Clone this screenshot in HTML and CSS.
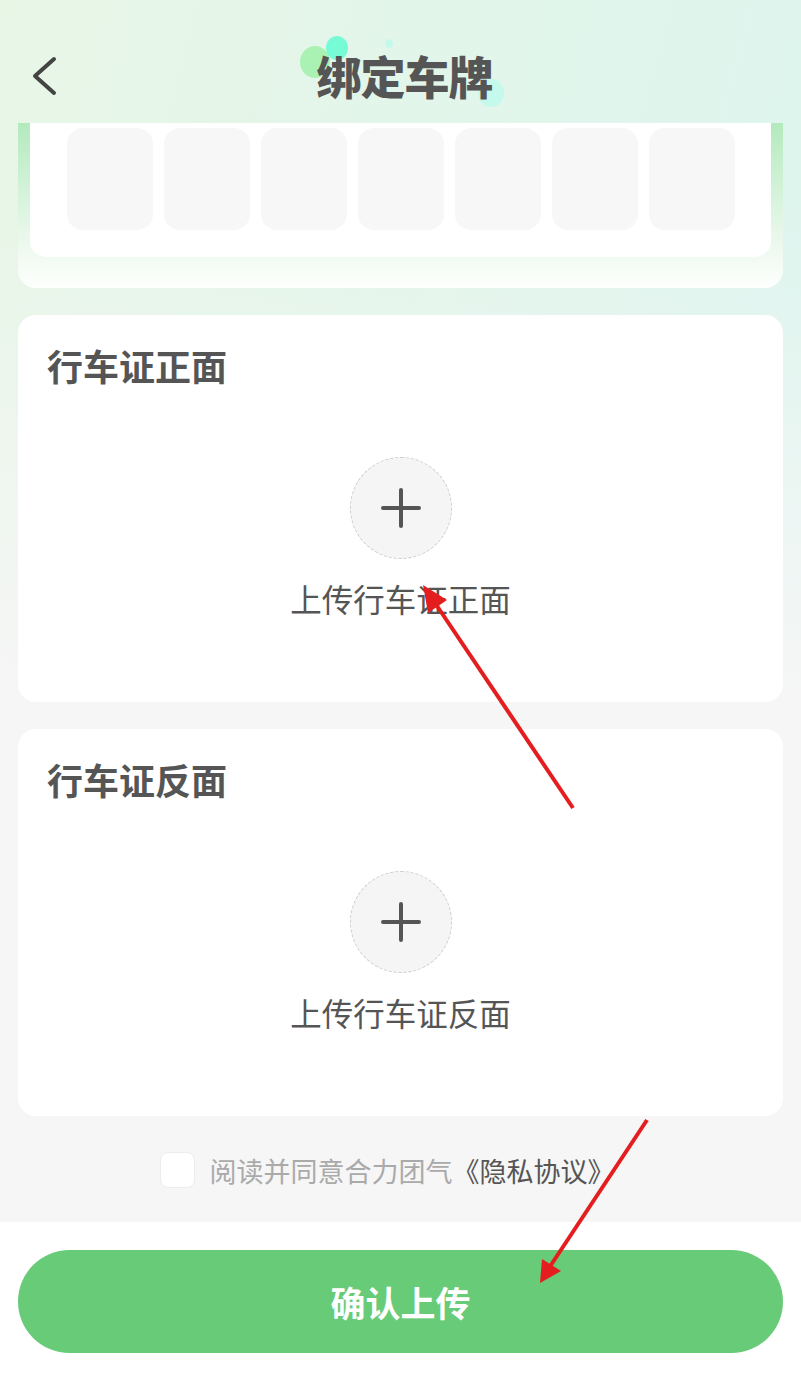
FILE: index.html
```html
<!DOCTYPE html>
<html lang="zh-CN">
  <head>
    <meta charset="UTF-8" />
    <meta name="viewport" content="width=device-width, initial-scale=1.0" />
    <title>绑定车牌</title>
    <link rel="stylesheet" href="styles.css">
  </head>
  <body>
    <div class="page">
      <div class="header">
        <a href="javascript:;" class="back">
          <svg width="30" height="44" viewBox="0 0 30 44"><path d="M24 5 L5 22 L24 39" fill="none" stroke="#444" stroke-width="4" stroke-linecap="round" stroke-linejoin="round"/></svg>
        </a>
        <div class="title">
          <span class="dot dot1"></span>
          <span class="dot dot2"></span>
          <span class="dot dot3"></span>
          <span class="dot dot4"></span>
          <h1>绑定车牌</h1>
        </div>
        <div></div>
      </div>

      <!-- 车牌输入 -->
      <div class="plate">
        <div class="plate-inner">
          <ul class="plate-list">
            <li></li><li></li><li></li><li></li><li></li><li></li><li></li>
          </ul>
        </div>
      </div>

      <div class="card">
        <h2>行车证正面</h2>
        <div class="upload">
          <div class="circle">
            <svg width="40" height="40" viewBox="0 0 40 40"><path d="M20 2 V38 M2 20 H38" stroke="#555" stroke-width="4" stroke-linecap="round"/></svg>
          </div>
          <p>上传行车证正面</p>
        </div>
      </div>

      <div class="card">
        <h2>行车证反面</h2>
        <div class="upload">
          <div class="circle">
            <svg width="40" height="40" viewBox="0 0 40 40"><path d="M20 2 V38 M2 20 H38" stroke="#555" stroke-width="4" stroke-linecap="round"/></svg>
          </div>
          <p>上传行车证反面</p>
        </div>
      </div>

      <div class="agree">
        <span class="check"></span>
        <span class="agree-text">阅读并同意合力团气<em>《隐私协议》</em></span>
      </div>

      <div class="footer">
        <a href="javascript:;" class="btn">确认上传</a>
      </div>

      <!-- 标注箭头 -->
      <svg class="marks" width="801" height="1386" viewBox="0 0 801 1386">
        <line x1="573" y1="808" x2="433" y2="600" stroke="#e41e1e" stroke-width="4"/>
        <polygon points="423,585 447,600 428,613" fill="#e41e1e"/>
        <line x1="647" y1="1120" x2="549" y2="1268" stroke="#e41e1e" stroke-width="4"/>
        <polygon points="540,1283 542,1259 561,1271" fill="#e41e1e"/>
      </svg>
    </div>
  </body>
</html>
```

FILE: styles.css
```css
* {
  margin: 0;
  padding: 0;
  box-sizing: border-box;
}
body {
  font-family: "Noto Sans CJK SC", "Noto Sans", sans-serif;
  background-color: #f6f6f6;
}
.page {
  position: relative;
  width: 801px;
  min-height: 1386px;
  background-color: #f6f6f6;
  background-image: linear-gradient(180deg, rgba(246, 246, 246, 0) 0, rgba(246, 246, 246, 0) 200px, #f6f6f6 700px),
    linear-gradient(105deg, #e8f6e6 0%, #dcf5ef 100%);
  background-repeat: no-repeat;
  background-size: 100% 700px;
  display: flex;
  flex-direction: column;
}
.header {
  height: 123px;
  padding-top: 29px;
  display: grid;
  grid-template-columns: 1fr auto 1fr;
  align-items: center;
}
.back {
  display: flex;
  padding-left: 30px;
}
.title {
  position: relative;
  padding-left: 8px;
}
.title h1 {
  position: relative;
  font-size: 45px;
  font-weight: 900;
  line-height: 50px;
  color: #555;
  letter-spacing: -1px;
}
.dot {
  position: absolute;
  border-radius: 50%;
}
.dot1 {
  left: -8px;
  top: -5px;
  width: 30px;
  height: 32px;
  background: rgba(150, 240, 160, 0.75);
}
.dot2 {
  left: 18px;
  top: -15px;
  width: 22px;
  height: 24px;
  background: rgba(100, 250, 210, 0.85);
}
.dot3 {
  left: 77px;
  top: -12px;
  width: 8px;
  height: 9px;
  background: rgba(190, 250, 235, 0.9);
}
.dot4 {
  left: 170px;
  top: 28px;
  width: 26px;
  height: 28px;
  background: rgba(190, 250, 235, 0.8);
}
.plate {
  margin: 0 18px;
  padding: 0 12px 31px;
  border-radius: 0 0 18px 18px;
  background: linear-gradient(180deg, #b3eabd 0%, #eaf8ec 70%, #fdfffd 100%);
}
.plate-inner {
  background: #fff;
  border-radius: 0 0 16px 16px;
  padding: 5px 36px 27px 37px;
}
.plate-list {
  list-style: none;
  display: flex;
  gap: 11px;
}
.plate-list li {
  flex: 1;
  height: 102px;
  background: #f7f7f7;
  border-radius: 16px;
}
.card {
  margin: 27px 18px 0;
  height: 387px;
  background: #fff;
  border-radius: 18px;
  padding: 31px 29px 0;
}
.card h2 {
  font-size: 36px;
  line-height: 38px;
  font-weight: 700;
  color: #555;
}
.upload {
  display: flex;
  flex-direction: column;
  align-items: center;
  margin-top: 73px;
}
.circle {
  width: 102px;
  height: 102px;
  border-radius: 50%;
  border: 1.5px dashed #cdcdcd;
  background: #f5f5f5;
  display: flex;
  align-items: center;
  justify-content: center;
}
.upload p {
  margin-top: 19px;
  font-size: 31.5px;
  line-height: 40px;
  color: #555;
}
.agree {
  display: flex;
  align-items: center;
  justify-content: center;
  gap: 15px;
  height: 36px;
  margin: 36px 0 34px;
  padding-right: 27px;
}
.check {
  width: 35px;
  height: 36px;
  border-radius: 8px;
  background: #fff;
  border: 1px solid #ececec;
}
.agree-text {
  font-size: 27px;
  color: #aaa;
}
.agree-text em {
  font-style: normal;
  color: #555;
}
.footer {
  flex: 1;
  background: #fff;
  padding: 28px 18px 0;
}
.btn {
  display: flex;
  align-items: center;
  justify-content: center;
  height: 103px;
  border-radius: 52px;
  background: #68cb78;
  color: #fff;
  font-size: 35px;
  font-weight: 700;
  text-decoration: none;
}
.marks {
  position: absolute;
  left: 0;
  top: 0;
  pointer-events: none;
}
```
